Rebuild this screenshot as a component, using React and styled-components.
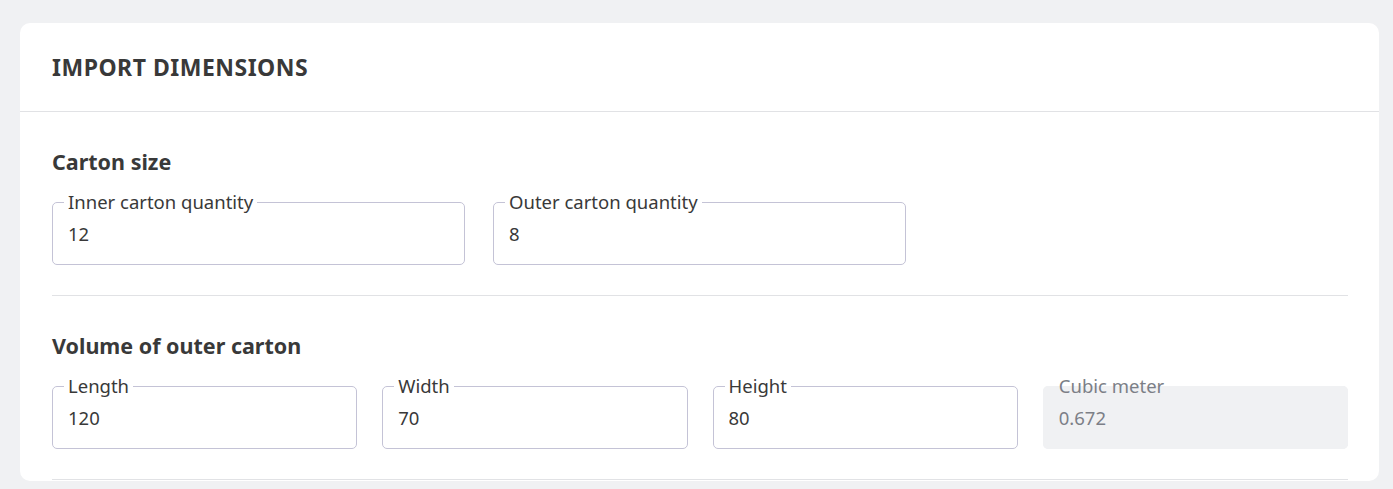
import React from "react";
import styled, { createGlobalStyle } from "styled-components";

const GlobalStyle = createGlobalStyle`
  body {
    margin: 0;
    background: #f0f1f3;
    font-family: "Noto Sans", "Open Sans", sans-serif;
    color: #393939;
  }
`;

const Page = styled.div`
  padding: 23px 14px 0 20px;
  height: 489px;
  box-sizing: border-box;
  overflow: hidden;
`;

const Card = styled.div`
  background: #fff;
  border-radius: 10px;
  padding-bottom: 1px;
`;

const CardHeader = styled.div`
  height: 88px;
  display: flex;
  align-items: center;
  padding: 0 32px;
  border-bottom: 1px solid #e1e2e5;
`;

const Title = styled.h1`
  margin: 0;
  font-size: 23px;
  font-weight: 700;
  letter-spacing: 0.5px;
  text-transform: uppercase;
`;

const CardBody = styled.div`
  padding: 0 31px 0 32px;
`;

const Section = styled.section`
  padding: 37px 0 30px;
  border-bottom: 1px solid #e1e2e5;
`;

const SectionTitle = styled.h2`
  margin: 0 0 17px;
  font-size: 21.5px;
  line-height: 26px;
  font-weight: 700;
`;

const Row = styled.div`
  display: grid;
  grid-template-columns: ${(p) => p.$cols};
  gap: ${(p) => p.$gap}px;
`;

const Field = styled.fieldset`
  margin: 0;
  padding: 0 11px;
  height: 73px;
  box-sizing: border-box;
  border: 1px solid ${(p) => (p.$disabled ? "#f0f1f3" : "#c4c3d6")};
  border-radius: 5px;
  background: ${(p) => (p.$disabled ? "#f0f1f3" : "#fff")};
  min-width: 0;
`;

const Legend = styled.legend`
  padding: 0 4px;
  font-size: 18.5px;
  line-height: 20px;
  color: ${(p) => (p.$disabled ? "#7c7f87" : "#393939")};
`;

const Value = styled.input`
  display: block;
  width: 100%;
  box-sizing: border-box;
  border: none;
  outline: none;
  background: transparent;
  padding: 10px 4px 0;
  font-family: inherit;
  font-size: 18.5px;
  line-height: 24px;
  color: ${(p) => (p.disabled ? "#7c7f87" : "#393939")};
`;

function TextField({ label, value, disabled }) {
  return (
    <Field $disabled={disabled}>
      <Legend $disabled={disabled}>{label}</Legend>
      <Value value={value} disabled={disabled} readOnly />
    </Field>
  );
}

export default function App() {
  return (
    <Page>
      <GlobalStyle />
      <Card>
        <CardHeader>
          <Title>Import dimensions</Title>
        </CardHeader>
        <CardBody>
          <Section>
            <SectionTitle>Carton size</SectionTitle>
            <Row $cols="413px 413px" $gap={28}>
              <TextField label="Inner carton quantity" value="12" />
              <TextField label="Outer carton quantity" value="8" />
            </Row>
          </Section>
          <Section>
            <SectionTitle>Volume of outer carton</SectionTitle>
            <Row $cols="repeat(4, 1fr)" $gap={25}>
              <TextField label="Length" value="120" />
              <TextField label="Width" value="70" />
              <TextField label="Height" value="80" />
              <TextField label="Cubic meter" value="0.672" disabled />
            </Row>
          </Section>
        </CardBody>
      </Card>
    </Page>
  );
}
